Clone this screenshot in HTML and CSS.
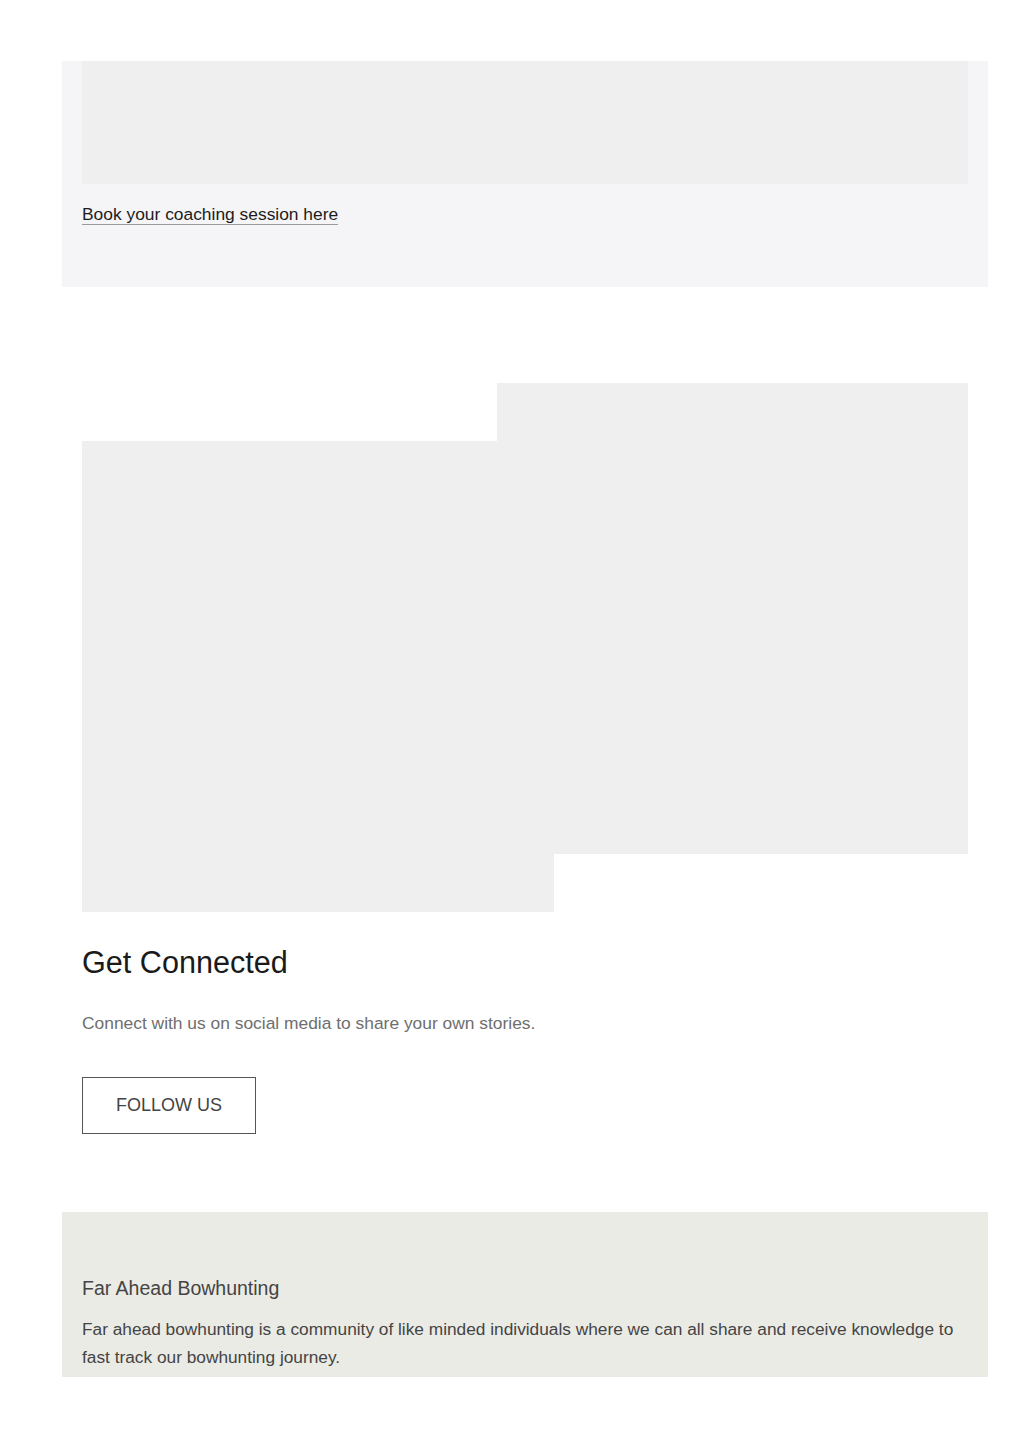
FILE: index.html
```html
<!DOCTYPE html>
<html lang="en">
<head>
<meta charset="utf-8">
<title>Far Ahead Bowhunting</title>
<link rel="stylesheet" href="styles.css">
</head>
<body>
<main class="page">
  <section class="coach-card">
    <div class="coach-image"></div>
    <p class="coach-link-row"><a class="coach-link" href="#">Book your coaching session here</a></p>
  </section>

  <section class="connect">
    <div class="collage">
      <div class="collage-img collage-left"></div>
      <div class="collage-img collage-right"></div>
    </div>
    <h2 class="connect-title">Get Connected</h2>
    <p class="connect-text">Connect with us on social media to share your own stories.</p>
    <a class="follow-btn" href="#">FOLLOW US</a>
  </section>

  <footer class="footer">
    <h3 class="footer-title">Far Ahead Bowhunting</h3>
    <p class="footer-text">Far ahead bowhunting is a community of like minded individuals where we can all share and receive knowledge to fast track our bowhunting journey.</p>
  </footer>
</main>
</body>
</html>
```

FILE: styles.css
```css
* { box-sizing: border-box; }
html, body { margin: 0; padding: 0; background: #ffffff; }
body {
  font-family: "Liberation Sans", Arial, Helvetica, sans-serif;
  color: #1c1c1c;
}
.page {
  padding-top: 61px;
  padding-left: 62px;
  width: 988px;
}
.coach-card {
  background: #f5f5f7;
  height: 226px;
  padding: 0 20px;
}
.coach-image {
  height: 123px;
  background: #efefef;
}
.coach-link-row {
  margin: 0;
  padding-top: 19px;
  font-size: 17.4px;
  line-height: 22px;
}
.coach-link {
  color: #1c1c1c;
  text-decoration: none;
  border-bottom: 1px solid #9a9a9a;
}
.connect {
  padding: 96px 20px 0;
}
.collage {
  display: grid;
  grid-template-columns: 415px 57px 414px;
  grid-template-rows: 58px 413px 58px;
}
.collage-img { background: #efefef; }
.collage-left { grid-column: 1 / 3; grid-row: 2 / 4; }
.collage-right { grid-column: 2 / 4; grid-row: 1 / 3; }
.connect-title {
  margin: 32px 0 0;
  font-weight: 400;
  font-size: 30.6px;
  line-height: 36px;
  color: #1a1a1a;
}
.connect-text {
  margin: 31px 0 0;
  font-size: 17.4px;
  line-height: 24px;
  color: #6e6e6e;
}
.follow-btn {
  display: inline-flex;
  align-items: center;
  justify-content: center;
  margin-top: 42px;
  width: 174px;
  height: 57px;
  border: 1px solid #555555;
  color: #444444;
  font-size: 18px;
  text-decoration: none;
}
.footer {
  margin-top: 78px;
  background: #ebebe6;
  height: 165px;
  padding: 63px 20px 0;
}
.footer-title {
  margin: 0;
  font-weight: 400;
  font-size: 19.5px;
  line-height: 26px;
  color: #444444;
}
.footer-text {
  margin: 14px 0 0;
  font-size: 17.3px;
  line-height: 28px;
  color: #444444;
}
```
